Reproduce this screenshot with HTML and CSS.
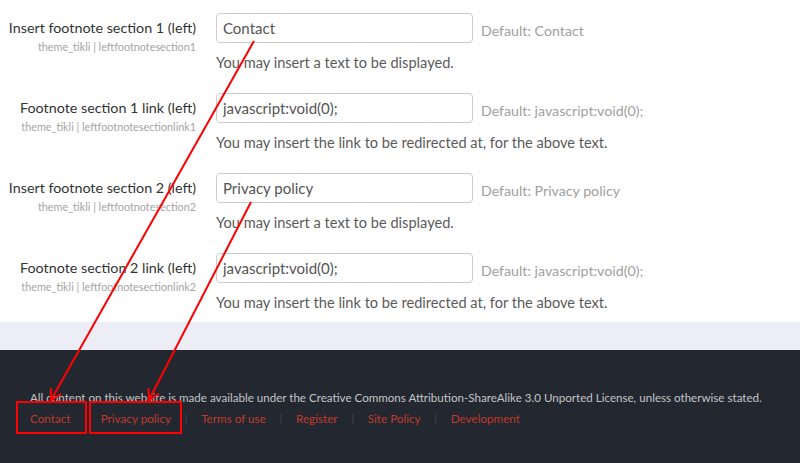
FILE: index.html
```html
<!DOCTYPE html>
<html lang="en">
<head>
<meta charset="utf-8">
<title>Theme settings</title>
<link rel="stylesheet" href="styles.css">
</head>
<body>
<div class="page">
  <main class="settings">
    <div class="row">
      <div class="label">
        <div class="name">Insert footnote section 1 (left)</div>
        <div class="key">theme_tikli | leftfootnotesection1</div>
      </div>
      <div class="control">
        <div class="field"><input class="text" type="text" value="Contact"><span class="default">Default: Contact</span></div>
        <div class="help">You may insert a text to be displayed.</div>
      </div>
    </div>
    <div class="row">
      <div class="label">
        <div class="name">Footnote section 1 link (left)</div>
        <div class="key">theme_tikli | leftfootnotesectionlink1</div>
      </div>
      <div class="control">
        <div class="field"><input class="text" type="text" value="javascript:void(0);"><span class="default">Default: javascript:void(0);</span></div>
        <div class="help">You may insert the link to be redirected at, for the above text.</div>
      </div>
    </div>
    <div class="row">
      <div class="label">
        <div class="name">Insert footnote section 2 (left)</div>
        <div class="key">theme_tikli | leftfootnotesection2</div>
      </div>
      <div class="control">
        <div class="field"><input class="text" type="text" value="Privacy policy"><span class="default">Default: Privacy policy</span></div>
        <div class="help">You may insert a text to be displayed.</div>
      </div>
    </div>
    <div class="row">
      <div class="label">
        <div class="name">Footnote section 2 link (left)</div>
        <div class="key">theme_tikli | leftfootnotesectionlink2</div>
      </div>
      <div class="control">
        <div class="field"><input class="text" type="text" value="javascript:void(0);"><span class="default">Default: javascript:void(0);</span></div>
        <div class="help">You may insert the link to be redirected at, for the above text.</div>
      </div>
    </div>
  </main>
  <div class="band"></div>
  <footer class="footer">
    <p class="license">All content on this website is made available under the Creative Commons Attribution-ShareAlike 3.0 Unported License, unless otherwise stated.</p>
    <ul class="links">
      <li><a href="#">Contact</a></li>
      <li><a href="#">Privacy policy</a></li>
      <li><a href="#">Terms of use</a></li>
      <li><a href="#">Register</a></li>
      <li><a href="#">Site Policy</a></li>
      <li><a href="#">Development</a></li>
    </ul>
  </footer>
  <svg class="annot" width="800" height="463" viewBox="0 0 800 463" aria-hidden="true">
    <g fill="none" stroke="#ff0000" stroke-width="2">
      <line x1="254" y1="41" x2="51" y2="400"/>
      <polyline points="61.3,393.9 51,400 50.9,388"/>
      <line x1="251" y1="202" x2="149" y2="400"/>
      <polyline points="159.1,393.5 149,400 148.4,388"/>
      <rect x="17" y="402" width="69" height="31"/>
      <rect x="90" y="402" width="91" height="31"/>
    </g>
  </svg>
</div>
</body>
</html>
```

FILE: styles.css
```css
html, body {
  margin: 0;
  padding: 0;
}
body {
  font-family: Lato, "Liberation Sans", sans-serif;
  background: #ffffff;
  width: 800px;
  height: 463px;
  overflow: hidden;
}
.page {
  position: relative;
  width: 800px;
  height: 463px;
  display: flex;
  flex-direction: column;
}
.settings {
  padding: 13px 0 9px 0;
  display: flex;
  flex-direction: column;
  gap: 20px;
}
.row {
  display: grid;
  grid-template-columns: 196px 1fr;
  column-gap: 20px;
}
.label {
  text-align: right;
  padding-top: 5px;
  white-space: nowrap;
}
.name {
  font-size: 14.3px;
  line-height: 20px;
  color: #333333;
}
.key {
  font-size: 10.8px;
  line-height: 16px;
  margin-top: 1px;
  color: #a4a4a4;
}
.field {
  display: flex;
  align-items: center;
  gap: 8px;
  height: 30px;
}
.text {
  box-sizing: border-box;
  width: 257px;
  height: 30px;
  margin: 0;
  padding: 0 6px;
  border: 1px solid #cccccc;
  border-radius: 4px;
  font-family: inherit;
  font-size: 15px;
  color: #555555;
  background: #ffffff;
  outline: none;
}
.default {
  font-size: 14.2px;
  color: #a0a0a0;
  padding-top: 4px;
  white-space: nowrap;
}
.help {
  margin-top: 10px;
  font-size: 14.6px;
  line-height: 20px;
  color: #5a5a5a;
}
.band {
  height: 28px;
  background: #ededf5;
}
.footer {
  flex: 1;
  background: #232830;
  padding: 38px 30px 0 30px;
}
.license {
  margin: 0;
  font-size: 11.6px;
  line-height: 20px;
  color: #c2c4c8;
  white-space: nowrap;
}
.links {
  list-style: none;
  margin: 0;
  padding: 0;
  display: flex;
  font-size: 11.7px;
  line-height: 20px;
}
.links li + li::before {
  content: "|";
  color: #40454d;
  margin: 0 13.6px;
}
.links a {
  color: #c0392b;
  text-decoration: none;
}
.annot {
  position: absolute;
  left: 0;
  top: 0;
  pointer-events: none;
}
```
